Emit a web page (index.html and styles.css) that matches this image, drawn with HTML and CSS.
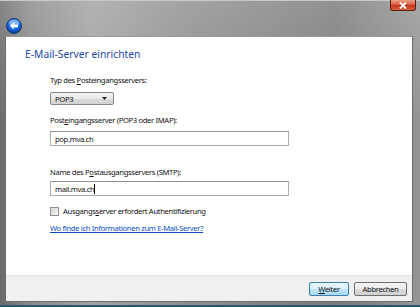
FILE: index.html
```html
<!DOCTYPE html>
<html lang="de">
<head>
  <meta charset="UTF-8">
  <title>E-Mail-Server einrichten</title>
  <link rel="stylesheet" href="styles.css">
</head>
<body>
  <div class="window">
    <!-- Glass title bar with back arrow and close button -->
    <div class="titlebar">
      <span class="back">
        <svg width="16" height="16" viewBox="0 0 16 16">
          <defs>
            <radialGradient id="bg" cx="50%" cy="35%" r="65%">
              <stop offset="0" stop-color="#6fb6ff"/>
              <stop offset="0.6" stop-color="#1763d8"/>
              <stop offset="1" stop-color="#0a3a8c"/>
            </radialGradient>
          </defs>
          <circle cx="8" cy="8" r="7.5" fill="url(#bg)" stroke="#0b2f6e" stroke-width="0.8"/>
          <ellipse cx="8" cy="5" rx="5.5" ry="3.2" fill="#fff" opacity="0.35"/>
          <path d="M4 8 L7.6 4.6 L7.6 6.8 L12 6.8 L12 9.2 L7.6 9.2 L7.6 11.4 Z" fill="#fff"/>
        </svg>
      </span>
      <span class="close">
        <svg width="8" height="7" viewBox="0 0 8 7">
          <path d="M1 0.5 L7 6.5 M7 0.5 L1 6.5" stroke="#fff" stroke-width="1.8"/>
        </svg>
      </span>
    </div>

    <div class="client">
      <div class="content">
        <h1>E-Mail-Server einrichten</h1>
        <div class="form">
          <div class="label first">Typ des <u>P</u>osteingangsservers:</div>
          <div class="select">
            <span>POP3</span>
            <svg width="5" height="3" viewBox="0 0 5 3"><path d="M0 0 H5 L2.5 3 Z" fill="#222"/></svg>
          </div>

          <div class="label">Post<u>e</u>ingangsserver (POP3 oder IMAP):</div>
          <div class="field">pop.mva.ch</div>

          <div class="label second">Name des P<u>o</u>stausgangsservers (SMTP):</div>
          <div class="field near">mail.mva.ch<span class="caret"></span></div>

          <div class="check"><span class="box"></span>Ausgangs<u>s</u>erver erfordert Authentifizierung</div>
          <a class="link" href="#">Wo finde ich Informationen zum E-Mail-Server?</a>
        </div>
      </div>

      <!-- Button strip -->
      <div class="footer">
        <button class="btn default"><u>W</u>eiter</button>
        <button class="btn">Abbrechen</button>
      </div>
    </div>
    <div class="bottom"></div>
  </div>
</body>
</html>
```

FILE: styles.css
```css
body {
  margin: 0;
  font-family: "Noto Sans", "Open Sans", sans-serif;
  background: #2c6676;
}

.window {
  width: 420px;
  height: 307px;
  display: flex;
  flex-direction: column;
  background:
    linear-gradient(to bottom, rgba(255, 255, 255, 0.18), rgba(255, 255, 255, 0) 40%),
    linear-gradient(90deg, #6a6a6a 0, #8a8a8a 7%, #a2a2a2 22%, #8e8e8e 45%, #868686 60%, #7a7a7a 80%, #949494 100%);
  border-top: 1px solid #c9c9c9;
  box-sizing: border-box;
}

.titlebar {
  height: 35px;
  display: flex;
  align-items: flex-start;
  padding-left: 6px;
}

.back {
  margin-top: 16px;
  width: 16px;
  height: 16px;
}

.close {
  margin-left: auto;
  margin-right: 4px;
  margin-top: -1px;
  width: 26px;
  height: 11px;
  display: flex;
  align-items: center;
  justify-content: center;
  border-radius: 0 0 3px 3px;
  border: 1px solid #5a1e14;
  border-top: none;
  background: linear-gradient(to bottom, #eca08a 0, #d95d40 45%, #c0361a 55%, #dc6242 100%);
  box-sizing: border-box;
}

.client {
  margin: 0 7px 0 5px;
  height: 266px;
  background: #fff;
  display: flex;
  flex-direction: column;
  border: 1px solid #6b6b6b;
  border-top-color: #9a9a9a;
  box-sizing: border-box;
}

.content {
  flex: 1;
  padding-top: 10px;
}

h1 {
  margin: 0 0 0 19px;
  font-size: 10.3px;
  line-height: 14px;
  font-weight: normal;
  color: #2148a6;
}

.form {
  padding-left: 44px;
  font-size: 7.6px;
  letter-spacing: -0.32px;
  color: #111;
}

.label {
  line-height: 11px;
  margin-top: 10px;
}

.label.first {
  margin-top: 14px;
}

.label.second {
  margin-top: 21px;
}

.select {
  margin-top: 6px;
  width: 64px;
  height: 13px;
  box-sizing: border-box;
  border: 1px solid #858585;
  border-radius: 2px;
  background: linear-gradient(to bottom, #f4f4f4 0, #e9e9e9 50%, #dcdcdc 51%, #d2d2d2 100%);
  display: flex;
  align-items: center;
  justify-content: space-between;
  padding: 0 6px 0 4px;
}

.field {
  margin-top: 5px;
  width: 239px;
  height: 15px;
  box-sizing: border-box;
  border: 1px solid #abadb3;
  border-top-color: #8d9096;
  padding-left: 4px;
  display: flex;
  align-items: center;
}

.field.near {
  margin-top: 3px;
}

.caret {
  width: 1px;
  height: 10px;
  background: #000;
}

.check {
  margin-top: 10px;
  display: flex;
  align-items: center;
  line-height: 11px;
}

.box {
  width: 9px;
  height: 9px;
  box-sizing: border-box;
  border: 1px solid #8f8f8f;
  background: linear-gradient(135deg, #d8d8d8, #f6f6f6);
  margin-right: 4px;
}

.link {
  display: block;
  margin-top: 6px;
  color: #0a4fc2;
  line-height: 11px;
}

.footer {
  height: 26px;
  background: #f0f0f0;
  border-top: 1px solid #dfdfdf;
  box-sizing: border-box;
  display: flex;
  justify-content: flex-end;
  align-items: center;
  gap: 5px;
  padding-right: 5px;
}

.btn {
  height: 14px;
  padding: 0;
  font-family: inherit;
  font-size: 7.6px;
  letter-spacing: -0.32px;
  color: #111;
  border: 1px solid #707070;
  border-radius: 2px;
  background: linear-gradient(to bottom, #f3f3f3 0, #ebebeb 50%, #dddddd 51%, #cfcfcf 100%);
  width: 53px;
}

.btn.default {
  width: 40px;
  border-color: #3c7fb1;
  background: linear-gradient(to bottom, #eaf6fd 0, #d9f0fc 50%, #bee6fd 51%, #a7d9f5 100%);
}

.bottom {
  flex: 1;
  border-bottom: 2px solid #27586a;
}
```
